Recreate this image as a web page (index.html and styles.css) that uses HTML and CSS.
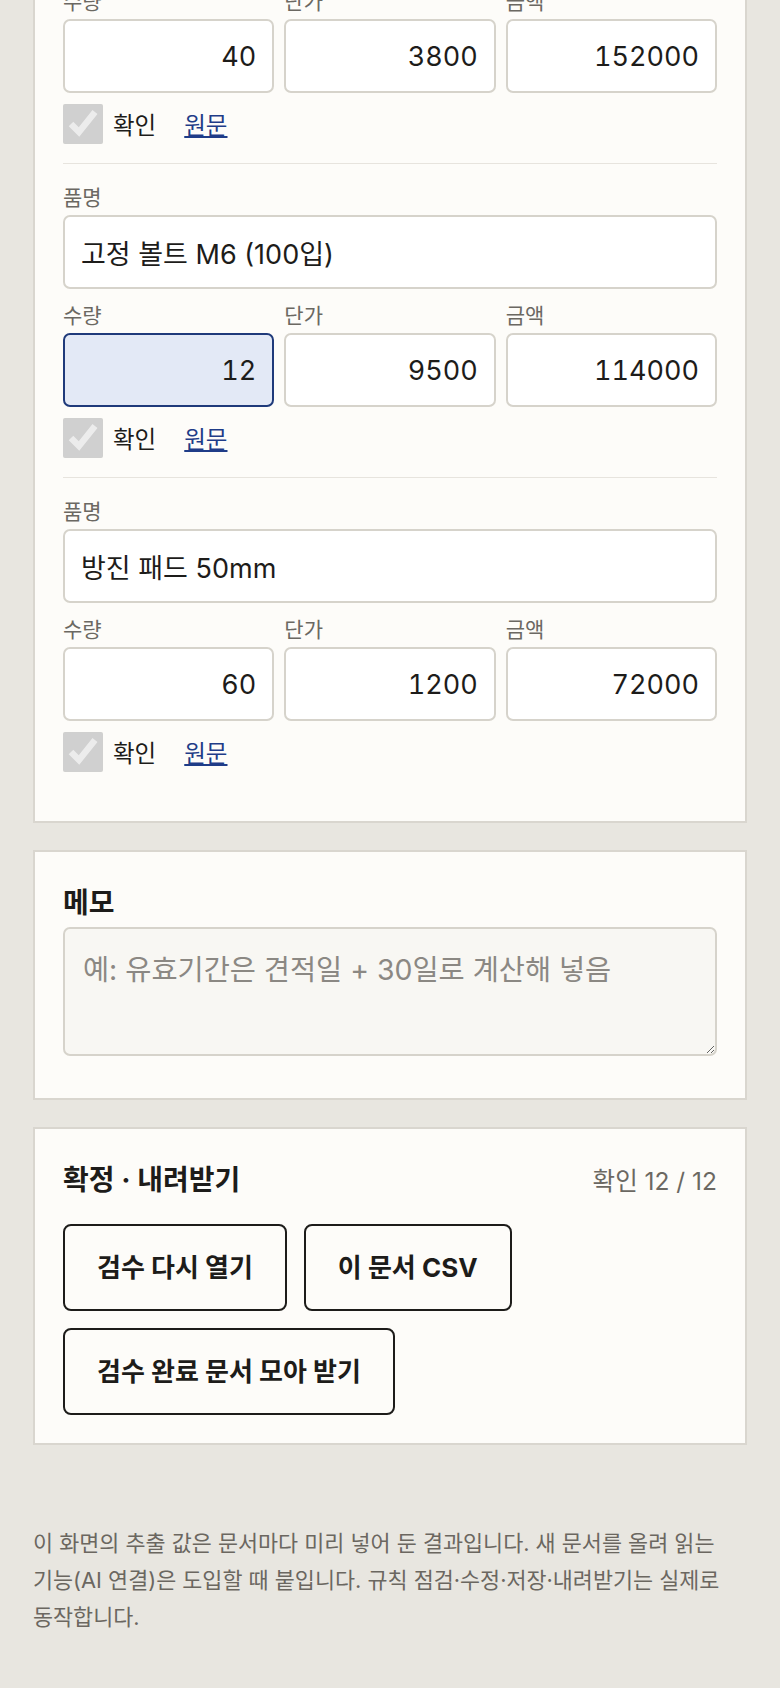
FILE: index.html
```html
<!DOCTYPE html>
<html lang="ko">
<head>
    <meta charset="UTF-8">
    <meta name="viewport" content="width=device-width, initial-scale=1.0">
    <title>견적서 검수</title>
    <link rel="stylesheet" href="styles.css">
</head>
<body>

<main class="page">

    <!-- 품목 목록 (위쪽은 스크롤로 가려진 상태) -->
    <section class="card items">
        <div class="item">
            <div class="nums">
                <label class="field"><span class="field-label">수량</span><input class="input num" value="40"></label>
                <label class="field"><span class="field-label">단가</span><input class="input num" value="3800"></label>
                <label class="field"><span class="field-label">금액</span><input class="input num" value="152000"></label>
            </div>
            <div class="check-row">
                <label class="check"><input type="checkbox" checked disabled> 확인</label>
                <a class="src" href="#">원문</a>
            </div>
        </div>

        <div class="item">
            <label class="field"><span class="field-label">품명</span><input class="input" value="고정 볼트 M6 (100입)"></label>
            <div class="nums">
                <label class="field"><span class="field-label">수량</span><input class="input num is-edit" value="12"></label>
                <label class="field"><span class="field-label">단가</span><input class="input num" value="9500"></label>
                <label class="field"><span class="field-label">금액</span><input class="input num" value="114000"></label>
            </div>
            <div class="check-row">
                <label class="check"><input type="checkbox" checked disabled> 확인</label>
                <a class="src" href="#">원문</a>
            </div>
        </div>

        <div class="item">
            <label class="field"><span class="field-label">품명</span><input class="input" value="방진 패드 50mm"></label>
            <div class="nums">
                <label class="field"><span class="field-label">수량</span><input class="input num" value="60"></label>
                <label class="field"><span class="field-label">단가</span><input class="input num" value="1200"></label>
                <label class="field"><span class="field-label">금액</span><input class="input num" value="72000"></label>
            </div>
            <div class="check-row">
                <label class="check"><input type="checkbox" checked disabled> 확인</label>
                <a class="src" href="#">원문</a>
            </div>
        </div>
    </section>

    <section class="card">
        <h2 class="card-title memo-title">메모</h2>
        <textarea class="memo" placeholder="예: 유효기간은 견적일 + 30일로 계산해 넣음"></textarea>
    </section>

    <section class="card">
        <div class="card-head">
            <h2 class="card-title">확정 · 내려받기</h2>
            <span class="count">확인 12 / 12</span>
        </div>
        <div class="actions">
            <button class="btn">검수 다시 열기</button>
            <button class="btn">이 문서 CSV</button>
            <button class="btn">검수 완료 문서 모아 받기</button>
        </div>
    </section>

    <p class="note">이 화면의 추출 값은 문서마다 미리 넣어 둔 결과입니다. 새 문서를 올려 읽는 기능(AI 연결)은 도입할 때 붙입니다. 규칙 점검·수정·저장·내려받기는 실제로 동작합니다.</p>

</main>

</body>
</html>
```

FILE: styles.css
```css
* {
    box-sizing: border-box;
}
body {
    margin: 0;
    background-color: #e8e6e0;
    color: #1d1c1a;
    font-family: Inter, "Noto Sans CJK KR", sans-serif;
    font-size: 21px;
    word-break: keep-all; /* 한글 단어 단위 줄바꿈 */
}
.page {
    padding: 0 33px 60px;
}
.card {
    background-color: #fdfcf9;
    border: 2px solid #d9d6cf;
    padding: 28px;
    margin-bottom: 27px;
}
/* 페이지가 아래로 스크롤된 상태라 첫 카드 윗부분은 화면 밖 */
.items {
    margin-top: -62px;
    padding-bottom: 30px;
}
.item {
    padding: 19px 0;
    border-bottom: 1px solid #e7e4de;
}
.item:last-child {
    border-bottom: none;
}
.field {
    display: flex;
    flex-direction: column;
    min-width: 0;
}
.field-label {
    font-size: 21px;
    line-height: 27px;
    padding-top: 1px;
    color: #6b6862;
    margin-bottom: 4px;
}
.item > .field {
    margin-bottom: 12px;
}
.input {
    width: 100%;
    height: 74px;
    padding: 0 16px;
    font-family: inherit;
    font-size: 27px;
    color: #1d1c1a;
    background-color: #fff;
    border: 2px solid #d6d3cb;
    border-radius: 7px;
}
.num {
    text-align: right;
    font-variant-numeric: tabular-nums;
}
.is-edit {
    background-color: #e3e9f6;
    border-color: #1f3a7a;
}
.nums {
    display: grid;
    grid-template-columns: repeat(3, 1fr);
    gap: 10px;
}
.check-row {
    display: flex;
    align-items: center;
    gap: 28px;
    margin-top: 11px;
    height: 40px;
    font-size: 23.5px;
}
.check {
    display: flex;
    align-items: center;
    gap: 10px;
}
.check input {
    width: 40px;
    height: 40px;
    margin: 0;
}
.src {
    color: #1f3c88;
}
.card-title {
    margin: 0;
    padding-top: 6px;
    font-size: 28px;
    line-height: 34px;
    font-weight: 700;
}
.memo-title {
    margin-bottom: 7px;
}
.memo {
    display: block;
    width: 100%;
    height: 129px;
    margin-bottom: 14px;
    padding: 21px 18px 17px;
    font-family: inherit;
    font-size: 28.4px;
    line-height: 1.4;
    color: #1d1c1a;
    background-color: #f8f7f3;
    border: 2px solid #d6d3cb;
    border-radius: 7px;
    resize: vertical;
}
.memo::placeholder {
    color: #8b8883;
}
.card-head {
    display: flex;
    justify-content: space-between;
    align-items: baseline;
    margin-bottom: 27px;
}
.count {
    font-size: 24.5px;
    color: #6b6862;
}
.actions {
    display: flex;
    flex-wrap: wrap;
    gap: 17px;
}
.btn {
    padding: 24px 32px;
    font-family: inherit;
    font-size: 26px;
    line-height: 35px;
    font-weight: 700;
    color: #1d1c1a;
    background: transparent;
    border: 2px solid #1d1c1a;
    border-radius: 8px;
    cursor: pointer;
}
.note {
    margin: 80px 0 0;
    font-size: 21.8px;
    line-height: 37px;
    color: #6b6760;
}
```
